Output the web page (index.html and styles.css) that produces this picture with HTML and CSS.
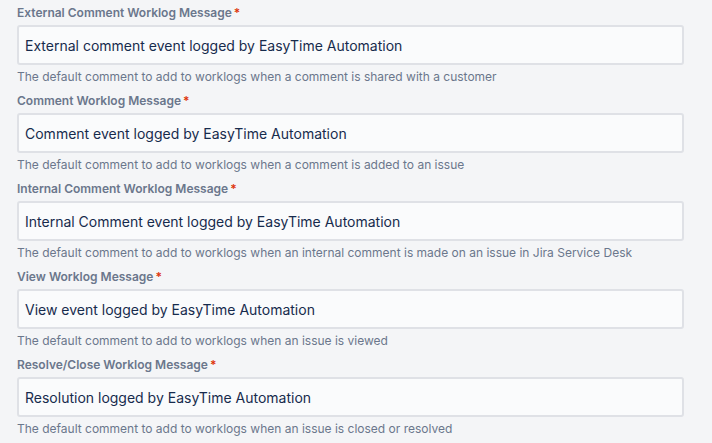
FILE: index.html
```html
<!DOCTYPE html>
<html lang="en">
<head>
  <meta charset="UTF-8">
  <title>Worklog Messages</title>
  <link rel="stylesheet" href="styles.css">
</head>
<body>
  <form class="settings">
    <div class="field">
      <label class="required">External Comment Worklog Message</label>
      <input class="text" type="text" value="External comment event logged by EasyTime Automation">
      <p class="help">The default comment to add to worklogs when a comment is shared with a customer</p>
    </div>
    <div class="field">
      <label class="required">Comment Worklog Message</label>
      <input class="text" type="text" value="Comment event logged by EasyTime Automation">
      <p class="help">The default comment to add to worklogs when a comment is added to an issue</p>
    </div>
    <div class="field">
      <label class="required">Internal Comment Worklog Message</label>
      <input class="text" type="text" value="Internal Comment event logged by EasyTime Automation">
      <p class="help">The default comment to add to worklogs when an internal comment is made on an issue in Jira Service Desk</p>
    </div>
    <div class="field">
      <label class="required">View Worklog Message</label>
      <input class="text" type="text" value="View event logged by EasyTime Automation">
      <p class="help">The default comment to add to worklogs when an issue is viewed</p>
    </div>
    <div class="field">
      <label class="required">Resolve/Close Worklog Message</label>
      <input class="text" type="text" value="Resolution logged by EasyTime Automation">
      <p class="help">The default comment to add to worklogs when an issue is closed or resolved</p>
    </div>
  </form>
</body>
</html>
```

FILE: styles.css
```css
* {
  margin: 0;
  padding: 0;
  box-sizing: border-box;
}
body {
  background-color: #f4f5f7;
  font-family: Inter, "Noto Sans", sans-serif;
  color: #172b4d;
}
.settings {
  display: flex;
  flex-direction: column;
  gap: 8px;
  padding: 5px 28px 0 17px;
}
.field {
  display: flex;
  flex-direction: column;
}
.field label {
  font-size: 12px;
  font-weight: 600;
  line-height: 16px;
  color: #6b778c;
  margin-bottom: 4px;
}
.required::after {
  content: "*";
  color: #de350b;
  margin-left: 2px;
}
input.text {
  height: 40px;
  width: 100%;
  border: 2px solid #dfe1e6;
  border-radius: 3px;
  background-color: #fafbfc;
  padding: 0 6px;
  font-family: inherit;
  font-size: 14px;
  color: #172b4d;
}
.help {
  font-size: 12px;
  line-height: 16px;
  color: #6b778c;
  margin-top: 4px;
}
```
